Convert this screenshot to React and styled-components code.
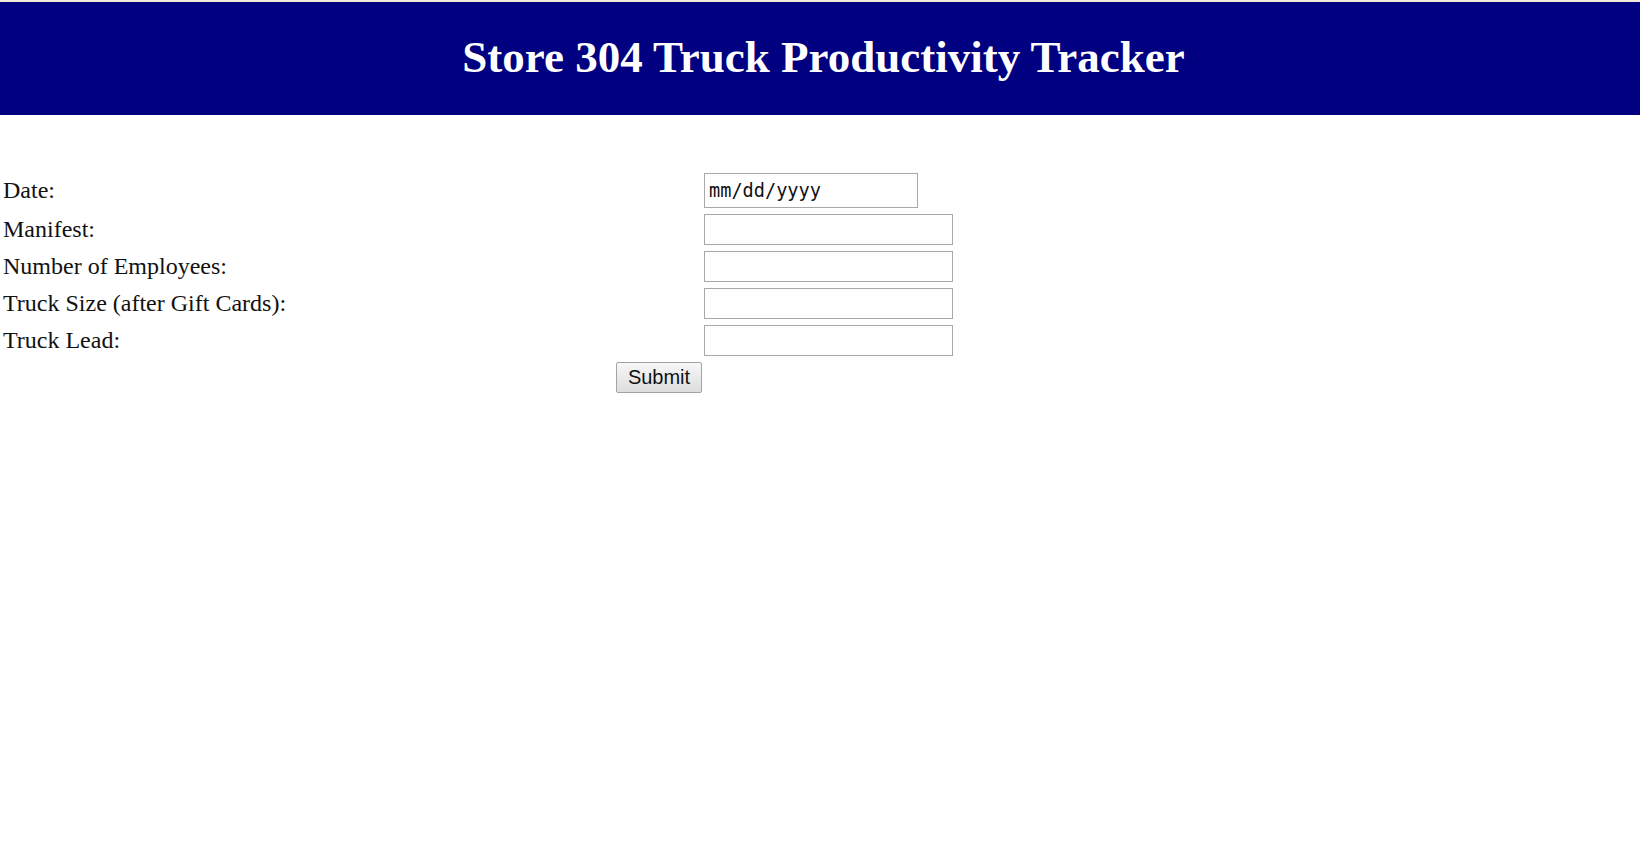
import React from "react";
import styled, { createGlobalStyle } from "styled-components";

const Global = createGlobalStyle`
  html, body { margin: 0; padding: 0; background: #ffffff; }
  body { font-family: "Liberation Serif", "Times New Roman", serif; color: #000; }
`;

const TopStrip = styled.div`
  height: 2px;
  background: #f1ebdc;
`;

const Header = styled.header`
  background: #000080;
  height: 113px;
  display: flex;
  align-items: center;
  justify-content: center;
  padding-left: 7px;
`;

const Title = styled.h1`
  margin: 0;
  padding-bottom: 2px;
  color: #ffffff;
  font-family: "Liberation Serif", "Times New Roman", serif;
  font-weight: bold;
  font-size: 45px;
  line-height: 1;
`;

const Form = styled.form`
  display: grid;
  grid-template-columns: 698px 260px;
  column-gap: 3px;
  row-gap: 6px;
  padding: 58px 0 0 3px;
  align-items: center;
`;

const Label = styled.label`
  font-size: 24px;
  line-height: 28px;
  padding-bottom: 2px;
  color: #111;
`;

const Field = styled.input`
  box-sizing: border-box;
  width: ${(p) => p.$w}px;
  height: ${(p) => p.$h}px;
  margin: 0;
  border: 1px solid #a8a8a8;
  border-radius: 0;
  background: #fff;
  padding: 0 4px;
  font-family: "DejaVu Sans Mono", "Liberation Mono", monospace;
  font-size: 18.6px;
  outline: none;
  &::placeholder { color: #111; opacity: 1; }
`;

const ButtonCell = styled.div`
  display: flex;
  justify-content: flex-end;
`;

const SubmitButton = styled.button`
  box-sizing: border-box;
  width: 86px;
  height: 31px;
  margin: 0 -1px 0 0;
  padding: 0;
  border: 1px solid #a3a3a3;
  border-radius: 2px;
  background: linear-gradient(#f7f7f7, #dddddd);
  font-family: "Liberation Sans", Arial, sans-serif;
  font-size: 20px;
  color: #111;
`;

const fields = [
  { id: "manifest", label: "Manifest:" },
  { id: "employees", label: "Number of Employees:" },
  { id: "size", label: "Truck Size (after Gift Cards):" },
  { id: "lead", label: "Truck Lead:" },
];

export default function App() {
  return (
    <>
      <Global />
      <TopStrip />
      <Header>
        <Title>Store 304 Truck Productivity Tracker</Title>
      </Header>
      <Form onSubmit={(e) => e.preventDefault()}>
        <Label htmlFor="date">Date:</Label>
        <Field id="date" type="text" placeholder="mm/dd/yyyy" $w={214} $h={35} />
        {fields.map((f) => (
          <React.Fragment key={f.id}>
            <Label htmlFor={f.id}>{f.label}</Label>
            <Field id={f.id} type="text" $w={249} $h={31} />
          </React.Fragment>
        ))}
        <ButtonCell>
          <SubmitButton type="submit">Submit</SubmitButton>
        </ButtonCell>
        <div />
      </Form>
    </>
  );
}
